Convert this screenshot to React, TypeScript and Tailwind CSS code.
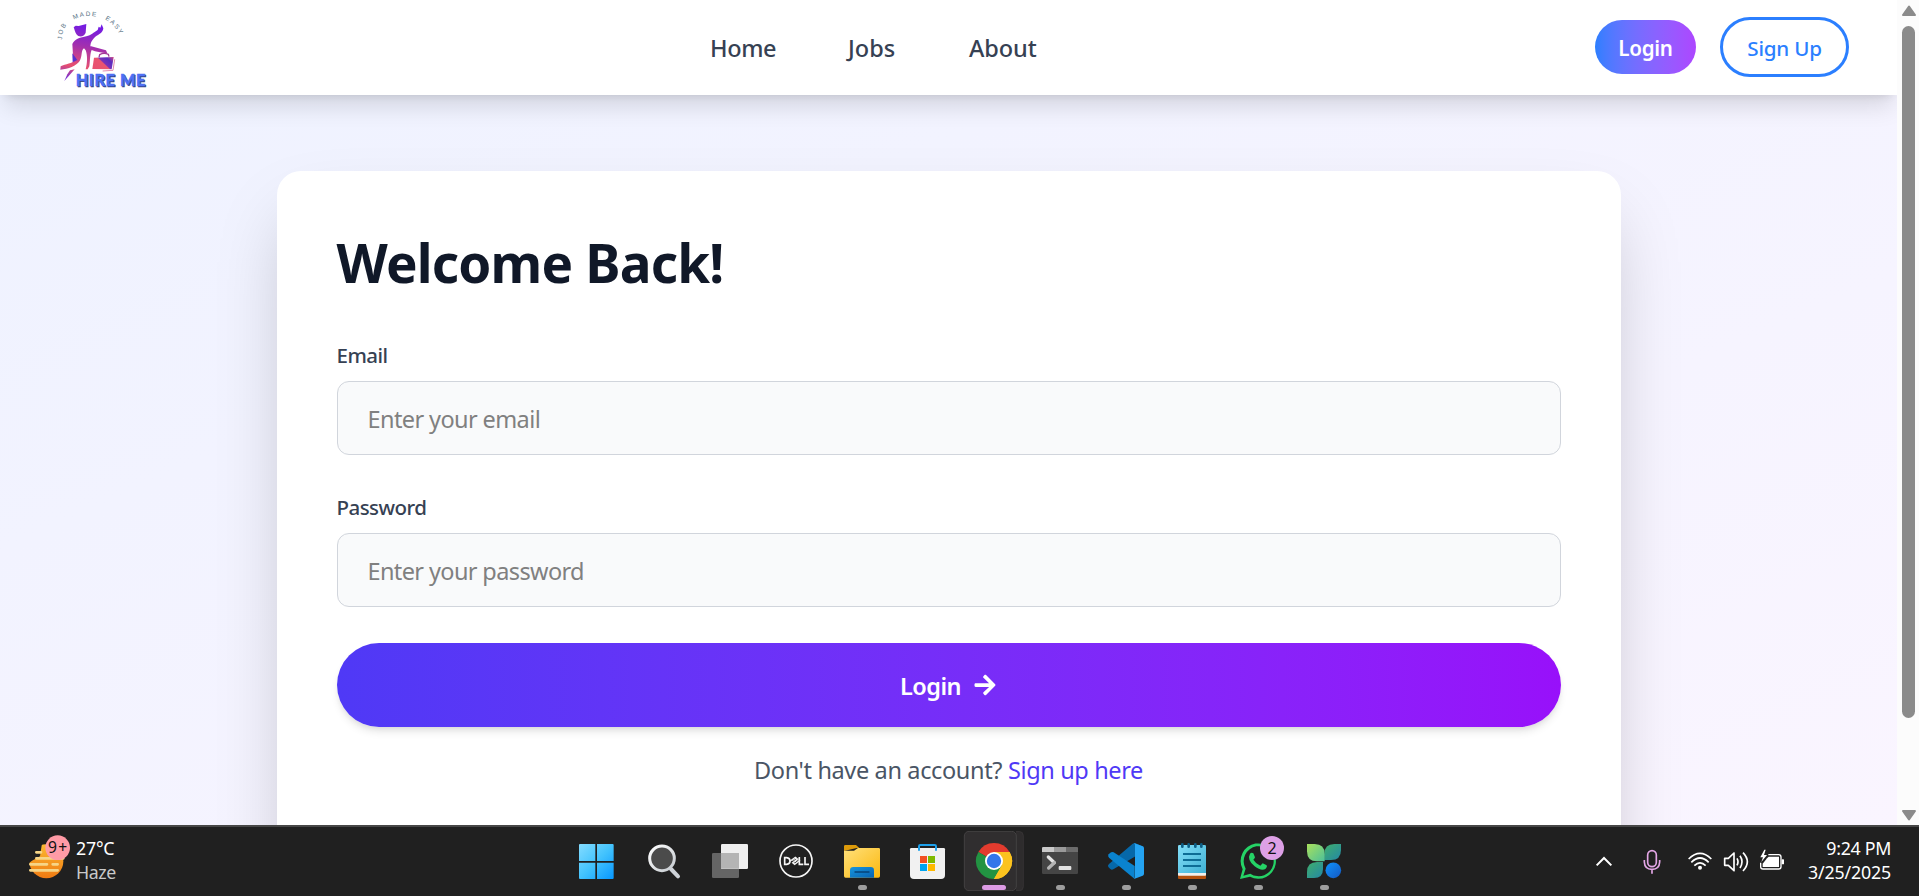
import type { ReactNode } from "react";
import { FaArrowRight } from "react-icons/fa";

function Logo() {
  return (
    <svg className="mt-2 h-[82px] w-[100px] self-start" viewBox="24 24 300 246">
      <defs>
        <linearGradient id="figure" gradientUnits="userSpaceOnUse" x1="150" y1="70" x2="120" y2="240">
          <stop offset="0" stopColor="#6d18ea" />
          <stop offset="0.4" stopColor="#a12fb0" />
          <stop offset="0.78" stopColor="#e8506f" />
          <stop offset="1" stopColor="#7a2fd0" />
        </linearGradient>
        <linearGradient id="bag" gradientUnits="userSpaceOnUse" x1="215" y1="165" x2="170" y2="212">
          <stop offset="0" stopColor="#d94a80" />
          <stop offset="0.25" stopColor="#5a2cc0" />
          <stop offset="0.5" stopColor="#7a30b8" />
          <stop offset="0.55" stopColor="#ea5470" />
          <stop offset="1" stopColor="#e8506f" />
        </linearGradient>
        <path id="arc" d="M66 119 C64 72 106 49 145 48 C196 47 232 76 248 125" />
      </defs>
      <text fill="#557083" fontFamily="Liberation Sans, sans-serif" fontSize="19" letterSpacing="4.4" wordSpacing="14">
        <textPath href="#arc">JOB MADE EASY</textPath>
      </text>
      <g fill="url(#figure)">
        <path d="M101 82 L107 77 L116 78 L139 72 L137 98 C134 107 124 112 115 108 C107 104 105 93 101 82Z" />
        <path d="M97 132 C104 117 122 112 139 109 C154 105 160 98 173 90 L176 80 L181 83 L185 73 L190 85 C189 98 177 103 166 110 C153 124 151 129 151 145 L157 147 C149 158 151 180 148 199 L143 208 L137 208 C142 190 143 166 137 151 L132 145 C122 152 128 167 119 183 C109 198 85 207 61 209 L62 199 C76 190 99 192 104 179 L99 166Z" />
        <path d="M104 208 L73 243 L82 223 L90 211Z" />
        <path d="M151 138 L184 147 L198 151 L202 160 L188 158 L165 154 L149 148Z" />
      </g>
      <path d="M97 160 L112 180 L98 187Z" fill="#5630cf" />
      <path d="M177 172 L179 164 Q191 157 205 163 L207 170" fill="none" stroke="#a43a98" strokeWidth="4" />
      <path d="M162 173 L221 171 L215 208 L157 207Z" fill="url(#bag)" />
      <path d="M224 178 L219 211 L188 213" fill="none" stroke="#d65083" strokeWidth="2" />
      <g fontFamily="Lato, sans-serif" fontWeight="900" fontSize="50" letterSpacing="2">
        <text x="110" y="261" fill="#334180" stroke="#334180" strokeWidth="1.5" textLength="211" lengthAdjust="spacingAndGlyphs">HIRE ME</text>
        <text x="107" y="258" fill="#4d70f5" stroke="#4d70f5" strokeWidth="1.5" textLength="211" lengthAdjust="spacingAndGlyphs">HIRE ME</text>
      </g>
    </svg>
  );
}

function Header() {
  return (
    <header className="relative z-10 flex h-[95px] shrink-0 items-center bg-white px-12 shadow-[0_15px_22.5px_-4.5px_rgba(0,0,0,0.12),0_6px_9px_-6px_rgba(0,0,0,0.12)]">
      <Logo />
      <nav className="ml-[562px] flex gap-[71px] pt-[2px] text-[23.5px] font-medium text-[#364153]">
        <a className="w-[67px] tracking-[-0.4px]">Home</a>
        <a className="w-[50px]">Jobs</a>
        <a className="w-[67px] tracking-[-0.1px]">About</a>
      </nav>
      <div className="ml-auto flex -translate-y-px items-center gap-6 text-[20.6px]">
        <a className="flex h-[54px] w-[101px] items-center justify-center rounded-full bg-linear-to-r from-[#2b7fff] to-[#ad46ff] pt-[3px] font-semibold tracking-[-0.3px] text-white">
          Login
        </a>
        <a className="flex h-[60px] w-[129px] items-center justify-center rounded-full border-3 border-[#2b7fff] pt-[3px] font-medium tracking-[-0.2px] whitespace-nowrap text-[#2b7fff]">
          Sign Up
        </a>
      </div>
    </header>
  );
}

function LoginCard() {
  return (
    <main className="mx-auto mt-[76px] h-[740px] w-[1344px] shrink-0 rounded-3xl bg-white px-[60px] pt-[60px] shadow-[0_37.5px_75px_-18px_rgba(0,0,0,0.25)]">
      <h1 className="pt-[2px] pb-[2px] text-[53px] leading-[60px] font-bold tracking-[-0.8px] text-[#101828]">Welcome Back!</h1>
      <form className="mt-[42px]">
        <label className="block pt-[3px] text-[20.5px] leading-[30px] font-medium tracking-[-0.5px] text-[#364153]">Email</label>
        <div className="mt-[11px] flex h-[74px] items-center rounded-xl border border-[#d1d5dc] bg-[#f9fafb] px-[30px] pt-1 text-[23.5px] tracking-[-0.6px] text-[#808080]">
          Enter your email
        </div>
        <label className="mt-[34px] block pt-[3px] text-[20.5px] leading-[30px] font-medium tracking-[-0.55px] text-[#364153]">Password</label>
        <div className="mt-[11px] flex h-[74px] items-center rounded-xl border border-[#d1d5dc] bg-[#f9fafb] px-[30px] pt-1 text-[23.5px] tracking-[-0.62px] text-[#808080]">
          Enter your password
        </div>
        <div className="mt-9 flex h-[84px] items-center justify-center gap-3 rounded-full bg-linear-to-r from-[#4f39f6] to-[#9810fa] text-[23.5px] font-semibold text-white shadow-[0_6px_9px_-1.5px_rgba(0,0,0,0.1),0_3px_6px_-3px_rgba(0,0,0,0.1)]">
          <span className="pt-[3px] tracking-[-0.5px]">Login</span>
          <FaArrowRight className="size-6" />
        </div>
      </form>
      <p className="mt-[25px] text-center text-[23.5px] leading-9 tracking-[-0.36px] text-[#4a5565]">
        Don't have an account? <a className="text-[#4f39f6]">Sign up here</a>
      </p>
    </main>
  );
}

function Scrollbar() {
  return (
    <div className="flex w-[22px] flex-col items-center bg-[#fcfcfc] pl-px">
      <svg className="mt-[5px] h-3 w-4" viewBox="0 0 16 12">
        <path d="M8 1.5 L14 10 H2Z" fill="#8b8b8b" stroke="#8b8b8b" strokeWidth="2" strokeLinejoin="round" />
      </svg>
      <div className="mt-[9px] h-[692px] w-[13px] rounded-full bg-[#8b8b8b]" />
      <svg className="mt-auto mb-1 h-3 w-4" viewBox="0 0 16 12">
        <path d="M8 10.5 L14 2 H2Z" fill="#8b8b8b" stroke="#8b8b8b" strokeWidth="2" strokeLinejoin="round" />
      </svg>
    </div>
  );
}

function TaskIcon({ x, running, children }: { x: number; running?: boolean; children: ReactNode }) {
  return (
    <svg className="h-[60px] w-[66px]" viewBox={`${x} 48 198 180`}>
      {children}
      {running && <rect x={x + 93} y="210" width="27" height="15" rx="7.5" fill="#9d9d9d" />}
    </svg>
  );
}

function Apps() {
  return (
    <div className="mt-1 flex self-start">
      <svg className="absolute" width="0" height="0">
        <defs>
          <linearGradient id="win" gradientUnits="userSpaceOnUse" x1="57" y1="87" x2="161" y2="192">
            <stop offset="0" stopColor="#84dcff" /><stop offset="0.5" stopColor="#43c3fd" /><stop offset="1" stopColor="#0797ff" />
          </linearGradient>
          <linearGradient id="lens" x1="0" y1="0" x2="1" y2="1">
            <stop offset="0" stopColor="#ffffff" /><stop offset="1" stopColor="#c4c9ce" />
          </linearGradient>
          <linearGradient id="folder" x1="0" y1="0" x2="1" y2="1">
            <stop offset="0" stopColor="#ffe07a" /><stop offset="1" stopColor="#fbb80f" />
          </linearGradient>
          <linearGradient id="blue" x1="0" y1="0" x2="1" y2="1">
            <stop offset="0" stopColor="#1896dc" /><stop offset="1" stopColor="#0762b3" />
          </linearGradient>
          <linearGradient id="pad" x1="0" y1="0" x2="1" y2="1">
            <stop offset="0" stopColor="#83def8" /><stop offset="1" stopColor="#3fb1d4" />
          </linearGradient>
          <linearGradient id="lime" x1="0" y1="0" x2="1" y2="1">
            <stop offset="0" stopColor="#a9e05c" /><stop offset="1" stopColor="#4cc09a" />
          </linearGradient>
          <linearGradient id="teal" x1="0" y1="0" x2="1" y2="1">
            <stop offset="0" stopColor="#3fae6c" /><stop offset="1" stopColor="#2488a5" />
          </linearGradient>
          <linearGradient id="ball" x1="0" y1="0" x2="1" y2="1">
            <stop offset="0" stopColor="#0f93fb" /><stop offset="1" stopColor="#1458c4" />
          </linearGradient>
        </defs>
      </svg>
      <TaskIcon x={9}>
        <path d="M60 87h46v51H57V90q0-3 3-3zM111 87h47q3 0 3 3v48h-50zM57 143h49v49H60q-3 0-3-3zM111 143h50v46q0 3-3 3h-47z" fill="url(#win)" />
      </TaskIcon>
      <TaskIcon x={207}>
        <path d="M333 162 L354 184" stroke="#ced3d8" strokeWidth="12" strokeLinecap="round" />
        <circle cx="306" cy="130" r="37" fill="#4b4b4b" stroke="url(#lens)" strokeWidth="9" />
      </TaskIcon>
      <TaskIcon x={405}>
        <rect x="456" y="114" width="81" height="75" rx="4" fill="#656565" />
        <rect x="483" y="87" width="81" height="75" rx="4" fill="#efefef" />
        <path d="M483 114h54v47h-50q-4 0-4-4z" fill="#b4b4b4" />
      </TaskIcon>
      <TaskIcon x={603}>
        <circle cx="708" cy="138" r="48" fill="none" stroke="#f5f5f5" strokeWidth="5" />
        <g fill="none" stroke="#f5f5f5" strokeWidth="5">
          <path d="M674 128 V148 H680 Q690 147 690 138 Q690 129 680 128Z" />
          <path d="M690 139 L706 127 L712 132 L698 143 L704 148 L720 136" strokeWidth="4" />
          <path d="M697 137 L709 129 M703 142 L716 132" strokeWidth="3" />
          <path d="M718 126 V148 H730 M735 126 V148 H747" />
        </g>
      </TaskIcon>
      <TaskIcon x={21} running>
        <path d="M76 90 H108 L118 99 H110 L72 108 V94 Q72 90 76 90Z" fill="#dc9a0a" />
        <path d="M72 107 H102 L114 99 H176 Q180 99 180 103 V183 Q180 188 175 188 H77 Q72 188 72 183Z" fill="url(#folder)" />
        <path d="M90 188 V166 Q90 156 100 156 H152 Q162 156 162 166 V188Z" fill="url(#blue)" />
        <path d="M105 171 H147" stroke="#06437a" strokeWidth="4" strokeLinecap="round" />
      </TaskIcon>
      <TaskIcon x={219}>
        <path d="M270 103 Q270 99 274 99 H371 Q375 99 375 103 V180 Q375 192 363 192 H282 Q270 192 270 180Z" fill="#f1f1f1" />
        <path d="M297 107 V94 Q297 90 301 90 H344 Q348 90 348 94 V107" fill="none" stroke="#1ea0ea" strokeWidth="6" />
        <rect x="300" y="123" width="21" height="21" fill="#f25022" />
        <rect x="324" y="123" width="21" height="21" fill="#7fba00" />
        <rect x="300" y="147" width="21" height="21" fill="#00a4ef" />
        <rect x="324" y="147" width="21" height="21" fill="#ffb900" />
      </TaskIcon>
      <TaskIcon x={417}>
        <path d="M588 49.5 H598 Q610 50 610 62 V215 Q610 227 598 227 H588" fill="#2e2c2d" stroke="#3c3a3b" strokeWidth="2" />
        <rect x="433" y="49" width="156" height="178" rx="14" fill="#302e2f" stroke="#434142" strokeWidth="3" />
        <path d="M522 138 L475.2 111 A54 54 0 0 1 568.8 111Z" fill="#e33b2e" />
        <path d="M522 138 L568.8 111 A54 54 0 0 1 522 192Z" fill="#fcc31e" />
        <path d="M522 138 L545.4 151.5 L522 192 A54 54 0 0 1 475.2 111Z" fill="#229342" />
        <path d="M522 111 H568.8 A54 54 0 0 1 522 192 L545.4 151.5Z" fill="#fcc31e" />
        <circle cx="522" cy="138" r="27" fill="#fff" />
        <circle cx="522" cy="138" r="21.5" fill="#3376ea" />
        <rect x="486" y="210" width="72" height="15" rx="7.5" fill="#dd9be4" />
      </TaskIcon>
      <TaskIcon x={615} running>
        <rect x="666" y="96" width="108" height="81" rx="4" fill="#454545" />
        <path d="M670 96 H702 V111 H666 V100 Q666 96 670 96Z" fill="#c9c9c9" />
        <path d="M702 96 H738 V111 H702Z" fill="#9a9a9a" />
        <path d="M738 96 H770 Q774 96 774 100 V111 H738Z" fill="#6c6c6c" />
        <path d="M685 126 L703 143" stroke="#e4e4e4" strokeWidth="10" strokeLinecap="round" />
        <path d="M703 143 L686 159" stroke="#b4b4b4" strokeWidth="10" strokeLinecap="round" />
        <rect x="716" y="153" width="38" height="12" rx="3" fill="#e2e2e2" />
      </TaskIcon>
      <TaskIcon x={33} running>
        <path d="M164 84 L191 95 L164 125 L100 163 Q95 166 91 162 L85 156 Q82 151 87 147 L158 86Z" fill="#0668a9" />
        <path d="M164 192 L87 128 Q82 123 86 118 L91 113 Q96 109 101 112 L164 153Z" fill="#0a83cf" />
        <path d="M162 84 L188 94 Q192 96 192 100 V176 Q192 180 188 182 L162 192 Q165 190 165 185 V91 Q165 86 162 84Z" fill="#24a3f2" />
      </TaskIcon>
      <TaskIcon x={231} running>
        <rect x="294" y="168" width="84" height="24" rx="3" fill="#b5510e" />
        <rect x="294" y="160" width="84" height="22" rx="2" fill="#f2efec" />
        <path d="M298 90 H374 Q378 90 378 94 V174 H294 V94 Q294 90 298 90Z" fill="url(#pad)" />
        <path d="M309 117H363M309 135H363M309 153H363" stroke="#0d6c95" strokeWidth="6" />
        <path d="M307 88V95M326 88V95M346 88V95M364 88V95" stroke="#0d5f86" strokeWidth="8" strokeLinecap="round" />
      </TaskIcon>
      <TaskIcon x={429} running>
        <path d="M480 192 L488 163 A53 53 0 1 1 510 185Z M490 182 L511 176 A45 45 0 1 0 497 161Z" fill="#25d366" fillRule="evenodd" />
        <path d="M510 116 Q515 111 520 115 L525 127 Q525 130 520 134 Q528 147 541 152 L548 145 L560 151 Q563 155 557 161 Q545 170 524 154 Q500 134 510 116Z" fill="#25d366" />
        <circle cx="576" cy="99" r="36" fill="#dda0e6" />
        <text x="576" y="116" textAnchor="middle" fontFamily="Noto Sans, sans-serif" fontSize="48" fill="#111">2</text>
      </TaskIcon>
      <TaskIcon x={627} running>
        <path d="M783 87 V105 Q783 135 753 135 H733 V117 Q733 87 763 87Z" fill="url(#teal)" />
        <path d="M681 189 V171 Q681 141 711 141 H729 V162 Q729 189 702 189Z" fill="url(#teal)" />
        <path d="M681 87 H704 Q734 87 734 117 V139 H711 Q681 139 681 109Z" fill="url(#lime)" />
        <circle cx="760" cy="166" r="29" fill="#202020" />
        <circle cx="760" cy="166" r="23.5" fill="url(#ball)" />
      </TaskIcon>
    </div>
  );
}

function Weather() {
  return (
    <div className="flex w-[563px] items-center">
      <svg className="ml-[27px] h-[46px] w-[46px] -translate-y-[5px]" viewBox="81 98 138 138">
        <defs>
          <linearGradient id="sun" x1="0" y1="0" x2="0" y2="1">
            <stop offset="0" stopColor="#fbb931" /><stop offset="1" stopColor="#ef7a12" />
          </linearGradient>
        </defs>
        <circle cx="139" cy="180" r="51" fill="url(#sun)" />
        <path d="M80 100 H130 L120 165 L96 178 L80 190Z" fill="#202020" />
        <path d="M109 153H123M109 171H190M91 189H141M158 189H173M91 207H173" stroke="#f6d587" strokeWidth="8" strokeLinecap="round" />
        <circle cx="173" cy="139" r="37" fill="#ff9ba6" />
        <text x="173" y="155" textAnchor="middle" fontFamily="Noto Sans, sans-serif" fontSize="47" textLength="58" fill="#111">9+</text>
      </svg>
      <div className="-mt-1 ml-[3px] text-[17.8px] leading-6 text-white">
        <div className="tracking-[-0.2px]">27°C</div>
        <div className="tracking-[-0.4px] text-[#c9c9c9]">Haze</div>
      </div>
    </div>
  );
}

function Tray() {
  return (
    <div className="ml-auto flex items-center pr-[28px]">
      <svg className="h-7 w-7" viewBox="90 172 84 84" fill="none" stroke="#fff" strokeWidth="6">
        <path d="M107 224 L129 202 L151 224" />
      </svg>
      <svg className="ml-5 h-7 w-[26px]" viewBox="234 172 78 84" fill="none" stroke="#e3a6e6" strokeWidth="5">
        <rect x="260" y="180" width="26" height="48" rx="13" />
        <path d="M250 208 V214 Q251 236 273 236 Q295 236 296 214 V208 M273 236 V249" />
      </svg>
      <svg className="ml-[22px] h-7 w-[26px]" viewBox="378 172 78 84" fill="none" stroke="#fff" strokeWidth="5">
        <path d="M383 205 Q417 171 451 205 M391 215 Q417 189 443 215 M400 225 Q417 208 434 225" />
        <circle cx="417" cy="231" r="6" fill="#fff" stroke="none" />
      </svg>
      <svg className="ml-2.5 h-7 w-[26px]" viewBox="486 172 78 84" fill="none" stroke="#fff" strokeWidth="5" strokeLinejoin="round">
        <path d="M491 203 H502 L519 187 V240 L502 224 H491Z" />
        <path d="M528 203 Q534 213 528 224 M537 195 Q549 213 537 232 M546 186 Q572 213 546 241" />
      </svg>
      <svg className="ml-[10px] h-7 w-[26px]" viewBox="594 172 78 84">
        <path d="M622 192 H653 Q660 192 660 199 V228 Q660 235 653 235 H606 Q599 235 599 228 V216" fill="none" stroke="#fff" strokeWidth="4" />
        <path d="M623 198 H654 V229 H605 V219 L618 203Z" fill="#fff" />
        <rect x="662" y="206" width="7" height="15" rx="2" fill="#fff" />
        <path d="M610 177 L598 200 H606 L601 214 L618 193 H609 L614 177Z" fill="#fff" />
      </svg>
      <div className="-mt-1 ml-5 w-[86px] text-right text-[17.8px] leading-6 whitespace-nowrap text-white">
        <div className="tracking-[-0.3px]">9:24 PM</div>
        <div className="tracking-[-0.15px]">3/25/2025</div>
      </div>
    </div>
  );
}

export default function App() {
  return (
    <div className="flex h-[896px] w-[1919px] flex-col overflow-hidden font-['Noto_Sans',sans-serif]">
      <div className="flex h-[825px] shrink-0">
        <div className="flex w-[1897px] flex-col overflow-hidden bg-linear-to-br from-[#eef2ff] to-[#faf5ff]">
          <Header />
          <LoginCard />
        </div>
        <Scrollbar />
      </div>
      <footer className="relative z-20 flex h-[71px] shrink-0 items-center border-t-2 border-[#474747] bg-[#202020]">
        <Weather />
        <Apps />
        <Tray />
      </footer>
    </div>
  );
}
